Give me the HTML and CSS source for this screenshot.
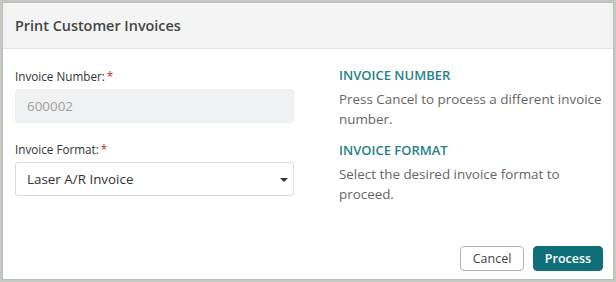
FILE: index.html
```html
<!DOCTYPE html>
<html>
<head>
<meta charset="utf-8">
<link rel="stylesheet" href="styles.css">
</head>
<body>
<div class="dialog">
  <div class="header">Print Customer Invoices</div>
  <div class="body">
    <div class="form">
      <div class="field">
        <label class="label">Invoice Number:<span class="req">*</span></label>
        <div class="input disabled">600002</div>
      </div>
      <div class="field">
        <label class="label">Invoice Format:<span class="req">*</span></label>
        <div class="input select">Laser A/R Invoice<span class="caret"></span></div>
      </div>
    </div>
    <div class="help">
      <h3 class="help-title">INVOICE NUMBER</h3>
      <p class="help-text">Press Cancel to process a different invoice number.</p>
      <h3 class="help-title">INVOICE FORMAT</h3>
      <p class="help-text">Select the desired invoice format to proceed.</p>
    </div>
  </div>
  <div class="footer">
    <button class="btn btn-cancel">Cancel</button>
    <button class="btn btn-primary">Process</button>
  </div>
</div>
</body>
</html>
```
FILE: styles.css
```css
html, body { margin: 0; padding: 0; }
body {
  width: 616px; height: 282px;
  background: #c5cbc3;
  font-family: "Open Sans", "Noto Sans", sans-serif;
  padding: 2px 2px 2px 2px;
  box-sizing: border-box;
}
.dialog {
  height: 278px;
  background: #fff;
  border: 1px solid #b9bfb8;
  box-sizing: border-box;
  display: flex;
  flex-direction: column;
}
.header {
  height: 46px;
  background: #f4f4f4;
  border-bottom: 1px solid #e4e4e4;
  font-size: 14.4px;
  font-weight: 600;
  color: #444;
  padding: 0 0 1px 12px;
  display: flex;
  align-items: center;
  box-sizing: border-box;
  flex-shrink: 0;
}
.body {
  display: flex;
  padding: 0 0 0 12px;
  flex: 1;
}
.form { width: 279px; padding-top: 19px; }
.field { margin-bottom: 18px; }
.label {
  display: block;
  font-size: 11.7px;
  color: #333;
  line-height: 16px;
  margin-bottom: 5px;
}
.req { color: #c0282d; margin-left: 2px; }
.input {
  height: 34px;
  box-sizing: border-box;
  border: 1px solid #e2e4e6;
  border-radius: 3px;
  padding: 0 11px;
  font-size: 13.4px;
  display: flex;
  align-items: center;
  color: #333;
  position: relative;
}
.input.disabled { background: #f1f2f3; color: #a0a0a0; border-color: #eceef0; }
.input.select { background: #fff; border-color: #dcdcdc; }
.caret {
  position: absolute;
  right: 5px;
  top: 15px;
  width: 0; height: 0;
  border-left: 4px solid transparent;
  border-right: 4px solid transparent;
  border-top: 4px solid #333;
}
.help {
  margin-left: 45px;
  width: 268px;
  padding-top: 18px;
}
.help-title {
  margin: 0;
  font-size: 13px;
  font-weight: 600;
  color: #277f89;
  line-height: 17px;
}
.help-text {
  margin: 5px 0 13px 0;
  font-size: 13.4px;
  line-height: 20px;
  color: #666;
}
.footer {
  display: flex;
  justify-content: flex-end;
  gap: 9px;
  padding: 0 10px 8px 0;
}
.btn {
  height: 25px;
  font-family: "Open Sans", "Noto Sans", sans-serif;
  font-size: 12.5px;
  border-radius: 4px;
  padding: 0 8px;
  cursor: pointer;
}
.btn-cancel {
  background: #fff;
  border: 1px solid #b4b4b4;
  color: #444;
  width: 64px;
}
.btn-primary {
  background: #0f6f78;
  border: 1px solid #0f6f78;
  color: #fff;
  font-weight: 600;
  width: 70px;
}
```
